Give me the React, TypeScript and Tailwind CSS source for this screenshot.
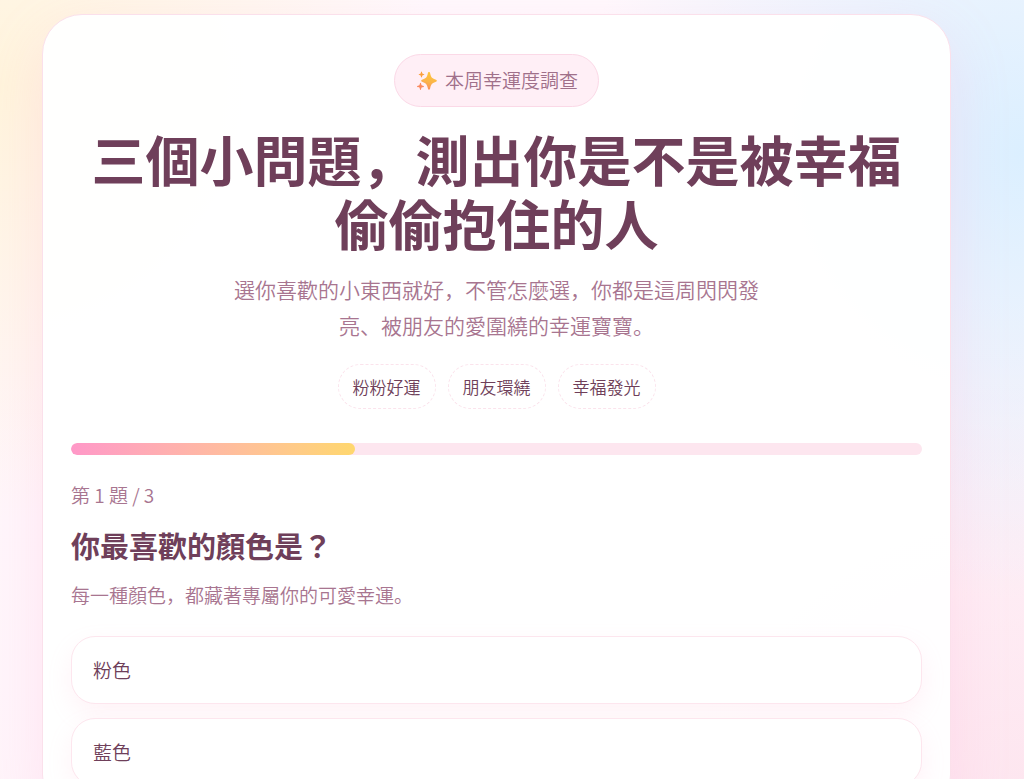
import { useState } from "react";

const tags = ["粉粉好運", "朋友環繞", "幸福發光"];
const options = ["粉色", "藍色"];

function Sparkles() {
  return (
    <svg viewBox="0 0 20 20" className="h-5 w-5" aria-hidden="true">
      <defs>
        <linearGradient id="spark" x1="0.6" y1="0" x2="0.3" y2="1">
          <stop offset="0" stopColor="#fdc63a" />
          <stop offset="0.55" stopColor="#fbb44a" />
          <stop offset="1" stopColor="#f98a5c" />
        </linearGradient>
      </defs>
      <path
        d="M12 1c.8 0 1 .7 1.200 1.500.8 3.600 1.700 4.800 5.200 5.900.8.2 1.400.6 1.400 1.300s-.6 1-1.400 1.300c-3.500 1.100-4.400 2.500-5.200 6.100-.2.900-.4 1.600-1.200 1.600s-1-.7-1.200-1.600c-.8-3.600-1.700-5-5.200-6.100-.8-.3-1.400-.6-1.400-1.300s.6-1.100 1.400-1.300c3.500-1.100 4.400-2.300 5.200-5.900.2-.8.4-1.500 1.200-1.500z"
        fill="url(#spark)"
      />
      <path
        d="M4.500.6c.6 0 .5 1.500.9 1.900s2 .4 2 1-1.600.6-2 1-.3 2-.9 2-.5-1.600-.9-2-2-.4-2-1 1.600-.6 2-1 .3-1.900.9-1.900z"
        fill="#fba03f"
      />
      <path
        d="M3.500 11.800c.7 0 .6 1.900 1.100 2.400s2.400.5 2.400 1.200-1.900.6-2.400 1.100-.4 2.500-1.100 2.500-.6-2-1.100-2.500-2.400-.4-2.400-1.100 1.900-.7 2.400-1.200.4-2.400 1.100-2.400z"
        fill="#fa8a5e"
      />
    </svg>
  );
}

function Progress({ step, total }: { step: number; total: number }) {
  return (
    <div
      role="progressbar"
      aria-label="第 1 題 / 3"
      aria-valuenow={step}
      aria-valuemax={total}
      className="mt-[34px] h-3 overflow-hidden rounded-full bg-[#fde6ef]"
    >
      <div
        className="h-full rounded-full bg-linear-to-r from-[#ff98c8] to-[#ffd76e]"
        style={{ width: `${(step / total) * 100}%` }}
      />
    </div>
  );
}

export default function App() {
  const [picked, setPicked] = useState<string | null>(null);

  return (
    <div className="min-h-screen bg-[radial-gradient(circle_at_0%_10%,#fff4dc_0%,transparent_34%),radial-gradient(circle_at_100%_18%,#dbefff_0%,transparent_36%),radial-gradient(circle_at_100%_100%,#fde4ee_0%,transparent_42%),linear-gradient(180deg,#fff9fd_0%,#fff4fa_100%)] pt-[14px] pr-[73px] pb-8 pl-[42px] font-['Noto_Sans_CJK_JP','Noto_Sans_CJK_TC',sans-serif] font-[350] text-[#6f3f5a]">
      <main className="rounded-[40px] border border-[#fbe0eb] bg-white/95 px-7 pt-[39px] pb-7 shadow-[0_20px_60px_rgba(255,150,200,0.18)]">
        <header className="flex flex-col items-center text-center">
          <p className="flex h-[53px] items-center gap-2 rounded-full border border-[#fbd9e7] bg-[#ffeff6] pr-5 pl-[22px] text-[19px] text-[#a0708a]">
            <Sparkles />
            本周幸運度調查
          </p>
          <h1 className="mt-5 text-[54px] leading-[64px] font-bold">
            三個小問題，測出你是不是被幸福偷偷抱住的人
          </h1>
          <p className="mt-4 max-w-[540px] text-[21px] leading-9 text-[#a87590]">
            選你喜歡的小東西就好，不管怎麼選，你都是這周閃閃發亮、被朋友的愛圍繞的幸運寶寶。
          </p>
          <ul className="mt-[21px] flex flex-wrap justify-center gap-3">
            {tags.map((tag) => (
              <li
                key={tag}
                className="flex h-[45px] items-center rounded-full border border-dashed border-[#fbe3ec] bg-white px-[14px] text-[17px]"
              >
                {tag}
              </li>
            ))}
          </ul>
        </header>

        <Progress step={1} total={3} />

        <section>
          <p className="mt-6 text-[19px] leading-8 text-[#a87590]">第 1 題 / 3</p>
          <h2 className="mt-[14px] text-[29px] leading-10 font-bold">你最喜歡的顏色是？</h2>
          <p className="mt-[14px] text-[19px] leading-8 text-[#a87590]">
            每一種顏色，都藏著專屬你的可愛幸運。
          </p>
          <div className="mt-[25px] flex flex-col gap-[14px]">
            {options.map((option) => (
              <button
                key={option}
                type="button"
                aria-pressed={picked === option}
                onClick={() => setPicked(option)}
                className="h-[68px] cursor-pointer rounded-3xl border border-[#fde6ee] bg-white px-[21px] text-left text-[19px] shadow-[0_10px_24px_rgba(255,170,200,0.14)] aria-pressed:border-[#ff98c8]"
              >
                {option}
              </button>
            ))}
          </div>
        </section>
      </main>
    </div>
  );
}
